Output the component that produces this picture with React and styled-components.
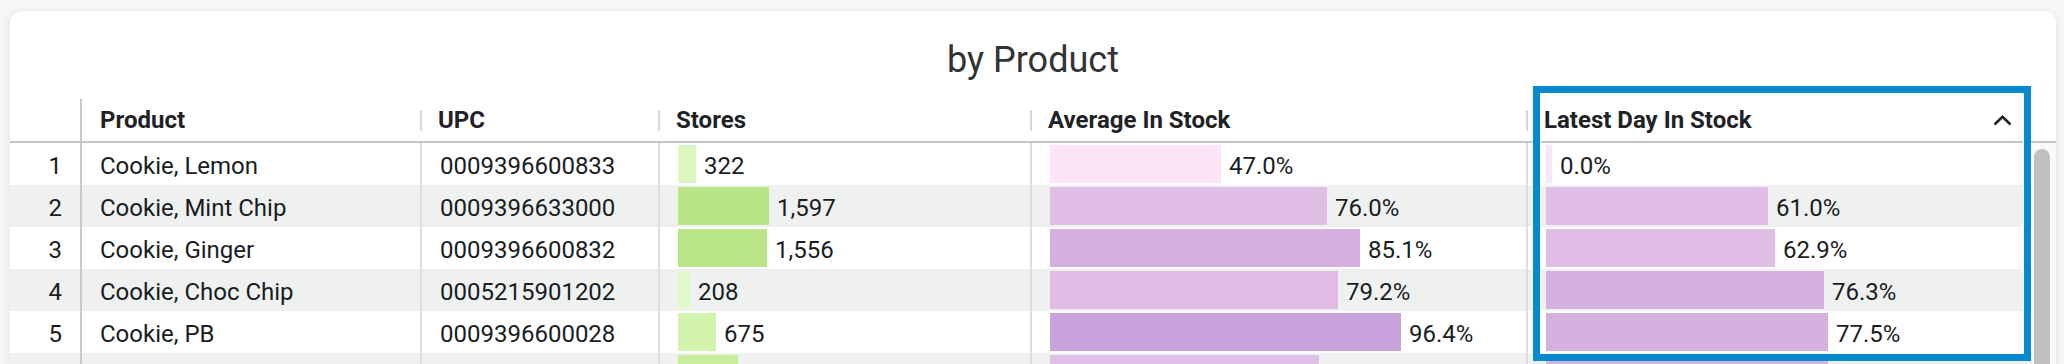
import React from "react";
import styled, { createGlobalStyle } from "styled-components";

const GlobalStyle = createGlobalStyle`
  html, body {
    margin: 0;
    padding: 0;
    height: 100%;
    overflow: hidden;
  }
  body {
    background: #f6f6f6;
    font-family: Roboto, "Liberation Sans", Arial, sans-serif;
    color: #181d1f;
  }
  * { box-sizing: border-box; }
`;

const Page = styled.div`
  padding: 11px 8px 0 10px;
`;

const Card = styled.div`
  position: relative;
  background: #fff;
  border-radius: 12px;
  box-shadow: 0 1px 7px rgba(0, 0, 0, 0.09);
  height: 400px;
  overflow: hidden;
`;

const Title = styled.h2`
  margin: 0;
  padding: 28px 0 18px;
  text-align: center;
  font-size: 36px;
  line-height: 42px;
  font-weight: 400;
  color: #333;
`;

const COLS = "72px 338px 238px 372px 496px 1fr";

const HeaderRow = styled.div`
  display: grid;
  grid-template-columns: ${COLS} 24px;
  height: 44px;
  border-bottom: 2px solid #c2c6ca;
`;

const HeaderCell = styled.div`
  display: flex;
  align-items: center;
  justify-content: space-between;
  padding: 0 20px 0 18px;
  font-size: 24px;
  line-height: 28px;
  font-weight: 700;
  color: #1f2326;
  white-space: nowrap;
  background: ${(p) =>
    p.$sep ? "linear-gradient(#d6d9dc, #d6d9dc) left center / 2px 21px no-repeat" : "none"};
`;

const NumberHeader = styled.div`
  border-right: 2px solid #c6cacd;
`;

const SortIcon = styled.svg`
  width: 19px;
  height: 11px;
  flex: none;
`;

const Body = styled.div`
  display: flex;
`;

const Rows = styled.div`
  flex: 1;
`;

const Row = styled.div`
  display: grid;
  grid-template-columns: ${COLS};
  height: 42px;
  background: ${(p) => (p.$striped ? "#eff1f1" : "#fff")};
`;

const NumberCell = styled.div`
  display: flex;
  align-items: center;
  justify-content: flex-end;
  padding: 3px 18px 0 0;
  font-size: 24px;
  border-right: 2px solid #c6cacd;
`;

const Cell = styled.div`
  display: flex;
  align-items: center;
  padding: 3px 18px 0;
  font-size: 24px;
  line-height: 28px;
  white-space: nowrap;
  overflow: hidden;
  border-left: ${(p) => (p.$sep ? "2px solid #dcdfe1" : "none")};
`;

const BarCell = styled(Cell)`
  padding-top: 0;
  gap: 8px;
`;

const Bar = styled.div`
  height: 38px;
  flex: none;
  background: ${(p) => p.$color};
`;

const BarValue = styled.span`
  padding-top: 3px;
`;

const ScrollTrack = styled.div`
  width: 24px;
  flex: none;
  background: #fafafa;
  padding: 6px 6px 0 2px;
`;

const ScrollThumb = styled.div`
  width: 16px;
  height: 400px;
  border-radius: 8px;
  background: #c1c1c1;
`;

const Highlight = styled.div`
  position: absolute;
  left: 1523px;
  top: 75px;
  width: 498px;
  height: 275px;
  border: 7px solid #0789cf;
  box-shadow: inset 0 0 0 1px #ffffff;
  pointer-events: none;
`;

const rows = [
  { product: "Cookie, Lemon", upc: "0009396600833", stores: 322, sc: "#dcf8c0", avg: 47.0, ac: "#fde5f7", last: 0.0, lc: "#fde5f7" },
  { product: "Cookie, Mint Chip", upc: "0009396633000", stores: 1597, sc: "#b9e587", avg: 76.0, ac: "#e0bee6", last: 61.0, lc: "#e0bee6" },
  { product: "Cookie, Ginger", upc: "0009396600832", stores: 1556, sc: "#bae588", avg: 85.1, ac: "#d6b1e0", last: 62.9, lc: "#e0bee6" },
  { product: "Cookie, Choc Chip", upc: "0005215901202", stores: 208, sc: "#e0f9c6", avg: 79.2, ac: "#dfbbe5", last: 76.3, lc: "#d5b1e0" },
  { product: "Cookie, PB", upc: "0009396600028", stores: 675, sc: "#d1f3ae", avg: 96.4, ac: "#caa2dc", last: 77.5, lc: "#d5b1e0" },
  { product: "", upc: "row-6", stores: 1050, sc: "#c6ee9c", avg: 74.0, ac: "#e1c0e7", last: 77.6, lc: "#d5b1e0", partial: true },
];

const storeWidth = (v) => Math.round(v * 0.057);
const pctWidth = (v) => Math.max(6, Math.round(v * 3.64));

export default function App() {
  return (
    <>
      <GlobalStyle />
      <Page>
        <Card>
          <Title>by Product</Title>
          <HeaderRow>
            <NumberHeader />
            <HeaderCell>Product</HeaderCell>
            <HeaderCell $sep>UPC</HeaderCell>
            <HeaderCell $sep>Stores</HeaderCell>
            <HeaderCell $sep>Average In Stock</HeaderCell>
            <HeaderCell $sep>
              Latest Day In Stock
              <SortIcon viewBox="0 0 19 11" aria-hidden="true">
                <polyline
                  points="1.5,9.5 9.5,1.8 17.5,9.5"
                  fill="none"
                  stroke="#1f2326"
                  strokeWidth="2.6"
                />
              </SortIcon>
            </HeaderCell>
            <div />
          </HeaderRow>
          <Body>
            <Rows>
              {rows.map((r, i) => (
                <Row key={r.upc} $striped={i % 2 === 1}>
                  <NumberCell>{r.partial ? null : i + 1}</NumberCell>
                  <Cell>{r.product}</Cell>
                  <Cell $sep>{r.partial ? null : r.upc}</Cell>
                  <BarCell $sep>
                    <Bar $color={r.sc} style={{ width: storeWidth(r.stores) }} />
                    {!r.partial && <BarValue>{r.stores.toLocaleString("en-US")}</BarValue>}
                  </BarCell>
                  <BarCell $sep>
                    <Bar $color={r.ac} style={{ width: pctWidth(r.avg) }} />
                    {!r.partial && <BarValue>{r.avg.toFixed(1)}%</BarValue>}
                  </BarCell>
                  <BarCell $sep>
                    <Bar $color={r.lc} style={{ width: pctWidth(r.last) }} />
                    {!r.partial && <BarValue>{r.last.toFixed(1)}%</BarValue>}
                  </BarCell>
                </Row>
              ))}
            </Rows>
            <ScrollTrack>
              <ScrollThumb />
            </ScrollTrack>
          </Body>
          <Highlight />
        </Card>
      </Page>
    </>
  );
}
